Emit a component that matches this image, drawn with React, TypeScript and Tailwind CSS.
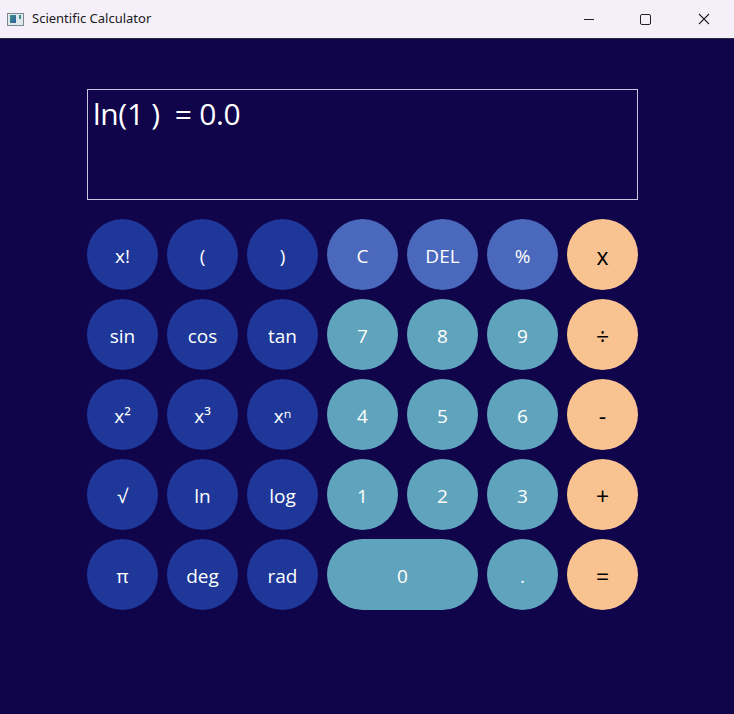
import React from "react";

type Key = { label: React.ReactNode; kind: "fn" | "ctl" | "num" | "op"; wide?: boolean };

const keys: Key[] = [
  { label: "x!", kind: "fn" },
  { label: "(", kind: "fn" },
  { label: ")", kind: "fn" },
  { label: "C", kind: "ctl" },
  { label: "DEL", kind: "ctl" },
  { label: "%", kind: "ctl" },
  { label: "x", kind: "op" },
  { label: "sin", kind: "fn" },
  { label: "cos", kind: "fn" },
  { label: "tan", kind: "fn" },
  { label: "7", kind: "num" },
  { label: "8", kind: "num" },
  { label: "9", kind: "num" },
  { label: "÷", kind: "op" },
  { label: "x²", kind: "fn" },
  { label: "x³", kind: "fn" },
  { label: "xⁿ", kind: "fn" },
  { label: "4", kind: "num" },
  { label: "5", kind: "num" },
  { label: "6", kind: "num" },
  { label: "-", kind: "op" },
  { label: "√", kind: "fn" },
  { label: "ln", kind: "fn" },
  { label: "log", kind: "fn" },
  { label: "1", kind: "num" },
  { label: "2", kind: "num" },
  { label: "3", kind: "num" },
  { label: "+", kind: "op" },
  { label: "π", kind: "fn" },
  { label: "deg", kind: "fn" },
  { label: "rad", kind: "fn" },
  { label: "0", kind: "num", wide: true },
  { label: ".", kind: "num" },
  { label: "=", kind: "op" },
];

const kindClass = {
  fn: "bg-[#1e3799] text-white text-[19px]",
  ctl: "bg-[#4a69bd] text-white text-[19px]",
  num: "bg-[#60a3bc] text-white text-[19px]",
  op: "bg-[#f8c291] text-black text-[23px]",
};

const TitleBar = () => (
  <div className="h-[39px] bg-[#f4eff8] border-b border-[#2a2a40] flex items-center">
    <div className="ml-[7px] w-[17px] h-[13px] border border-[#7a8a90] bg-[#dfe8ea] flex items-center px-[2px] gap-[2px]">
      <div className="w-[8px] h-[8px] bg-gradient-to-br from-[#3c8f8a] to-[#2f5f9a]" />
      <div className="w-[2px] h-[4px] bg-[#3c8f8a] self-start mt-[1px] ml-[1px]" />
    </div>
    <span className="ml-[8px] text-[13px] text-[#1a1a1a]" style={{ fontFamily: '"Noto Sans", sans-serif' }}>
      Scientific Calculator
    </span>
    <div className="ml-auto flex items-center h-full">
      <div className="w-[57px] h-full flex items-center justify-center">
        <div className="w-[10px] h-px bg-[#222]" />
      </div>
      <div className="w-[57px] h-full flex items-center justify-center">
        <div className="w-[11px] h-[11px] border border-[#222] rounded-[2px]" />
      </div>
      <div className="w-[60px] h-full flex items-center justify-center">
        <svg width="12" height="12" viewBox="0 0 12 12" stroke="#222" strokeWidth="1.1">
          <path d="M1 1 L11 11 M11 1 L1 11" />
        </svg>
      </div>
    </div>
  </div>
);

export default function App() {
  return (
    <div className="w-[734px] h-[714px] bg-[#10044a] flex flex-col overflow-hidden" style={{ fontFamily: '"Open Sans", "Noto Sans", sans-serif' }}>
      <TitleBar />
      <div className="pl-[87px] pt-[50px]">
        <div className="w-[551px] h-[111px] border border-[#c9c6e0] px-[5px] pt-[4px]">
          <p className="text-white text-[30px] leading-[40px] tracking-[-0.3px]">ln(1 )&nbsp;&nbsp;= 0.0</p>
        </div>
        <div className="mt-[19px] grid grid-cols-[repeat(7,71px)] auto-rows-[71px] gap-[9px]">
          {keys.map((k, i) => (
            <button
              key={i}
              className={`${kindClass[k.kind]} ${k.wide ? "col-span-2" : ""} rounded-full flex items-center justify-center pt-[3px]`}
            >
              {k.label}
            </button>
          ))}
        </div>
      </div>
    </div>
  );
}
